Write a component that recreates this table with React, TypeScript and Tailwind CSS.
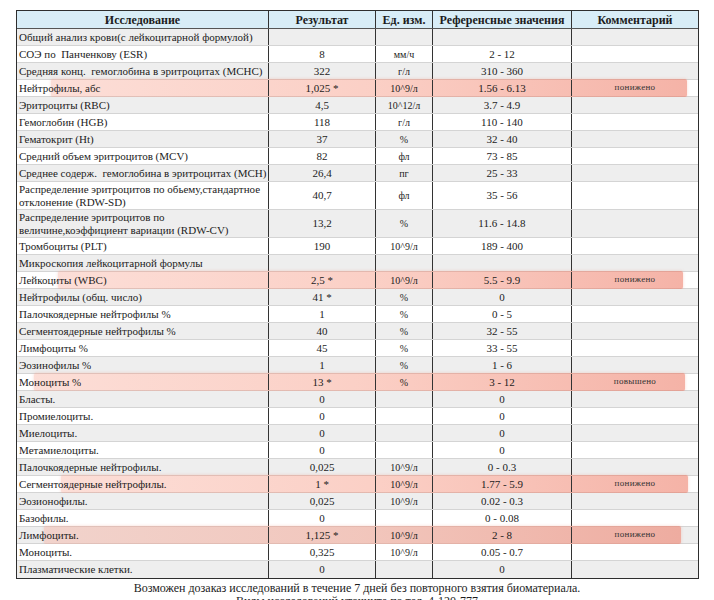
type Row = {
  name: string;
  result: string;
  unit: string;
  ref: string;
  comment?: string;
  mark?: [number, number];
  tall?: boolean;
};

const rows: Row[] = [
  { name: 'Общий анализ крови(с лейкоцитарной формулой)', result: '', unit: '', ref: '' },
  { name: 'СОЭ по  Панченкову (ESR)', result: '8', unit: 'мм/ч', ref: '2 - 12' },
  { name: 'Средняя конц.  гемоглобина в эритроцитах (MCHC)', result: '322', unit: 'г/л', ref: '310 - 360' },
  { name: 'Нейтрофилы, абс', result: '1,025 *', unit: '10^9/л', ref: '1.56 - 6.13', comment: 'понижено', mark: [34, 670] },
  { name: 'Эритроциты (RBC)', result: '4,5', unit: '10^12/л', ref: '3.7 - 4.9' },
  { name: 'Гемоглобин (HGB)', result: '118', unit: 'г/л', ref: '110 - 140' },
  { name: 'Гематокрит (Ht)', result: '37', unit: '%', ref: '32 - 40' },
  { name: 'Средний объем эритроцитов (MCV)', result: '82', unit: 'фл', ref: '73 - 85' },
  { name: 'Среднее содерж.  гемоглобина в эритроцитах (MCH)', result: '26,4', unit: 'пг', ref: '25 - 33' },
  { name: 'Распределение эритроцитов по обьему,стандартное отклонение (RDW-SD)', result: '40,7', unit: 'фл', ref: '35 - 56', tall: true },
  { name: 'Распределение эритроцитов по величине,коэффициент вариации (RDW-CV)', result: '13,2', unit: '%', ref: '11.6 - 14.8', tall: true },
  { name: 'Тромбоциты (PLT)', result: '190', unit: '10^9/л', ref: '189 - 400' },
  { name: 'Микроскопия лейкоцитарной формулы', result: '', unit: '', ref: '' },
  { name: 'Лейкоциты (WBC)', result: '2,5 *', unit: '10^9/л', ref: '5.5 - 9.9', comment: 'понижено', mark: [41, 666] },
  { name: 'Нейтрофилы (общ. число)', result: '41 *', unit: '%', ref: '0' },
  { name: 'Палочкоядерные нейтрофилы %', result: '1', unit: '%', ref: '0 - 5' },
  { name: 'Сегментоядерные нейтрофилы %', result: '40', unit: '%', ref: '32 - 55' },
  { name: 'Лимфоциты %', result: '45', unit: '%', ref: '33 - 55' },
  { name: 'Эозинофилы %', result: '1', unit: '%', ref: '1 - 6' },
  { name: 'Моноциты %', result: '13 *', unit: '%', ref: '3 - 12', comment: 'повышено', mark: [17, 668] },
  { name: 'Бласты.', result: '0', unit: '', ref: '0' },
  { name: 'Промиелоциты.', result: '0', unit: '', ref: '0' },
  { name: 'Миелоциты.', result: '0', unit: '', ref: '0' },
  { name: 'Метамиелоциты.', result: '0', unit: '', ref: '0' },
  { name: 'Палочкоядерные нейтрофилы.', result: '0,025', unit: '10^9/л', ref: '0 - 0.3' },
  { name: 'Сегментоядерные нейтрофилы.', result: '1 *', unit: '10^9/л', ref: '1.77 - 5.9', comment: 'понижено', mark: [44, 671] },
  { name: 'Эозионофилы.', result: '0,025', unit: '10^9/л', ref: '0.02 - 0.3' },
  { name: 'Базофилы.', result: '0', unit: '', ref: '0 - 0.08' },
  { name: 'Лимфоциты.', result: '1,125 *', unit: '10^9/л', ref: '2 - 8', comment: 'понижено', mark: [27, 664] },
  { name: 'Моноциты.', result: '0,325', unit: '10^9/л', ref: '0.05 - 0.7' },
  { name: 'Плазматические клетки.', result: '0', unit: '', ref: '0' },
];

const cell = "relative flex items-center font-['Liberation_Serif',serif]";

export default function App() {
  return (
    <div className="w-[714px] h-[600px] overflow-hidden bg-white text-[#1c1c1c] font-['Liberation_Serif',serif]">
      <div className="pt-[10px] pl-[16px]">
        <div className="w-[683px] border-[1.5px] border-[#2e2e2e]">
          <div className="flex h-[18px] bg-[#d8edf7] border-b border-[#555] font-bold text-[12px] leading-none">
            <div className={`${cell} w-[252px] justify-center border-r border-[#333]`}>Исследование</div>
            <div className={`${cell} w-[107px] justify-center border-r border-[#333]`}>Результат</div>
            <div className={`${cell} w-[57px] justify-center border-r border-[#333]`}>Ед. изм.</div>
            <div className={`${cell} w-[139px] justify-center border-r border-[#333]`}>Референсные значения</div>
            <div className={`${cell} flex-1 justify-center`}>Комментарий</div>
          </div>
          {rows.map((r, i) => (
            <div
              key={i}
              className={`relative flex text-[11px] border-b border-[#d4d4d4] last:border-b-0 ${r.tall ? 'h-[28px]' : 'h-[17px]'} ${i % 2 === 0 ? 'bg-[#eeeeee]' : 'bg-white'}`}
            >
              {r.mark && (
                <div
                  className="absolute top-[-1px] h-[18px] rounded-[2px] bg-gradient-to-r from-[rgba(247,160,140,0.35)] via-[rgba(246,150,128,0.45)] to-[rgba(238,128,108,0.6)] shadow-[0_0_3px_rgba(240,140,120,0.35)]"
                  style={{ left: r.mark[0], width: r.mark[1] - r.mark[0] }}
                />
              )}
              <div className={`${cell} w-[252px] pl-[2px] border-r border-[#333] leading-[13px] ${r.tall ? 'pr-1' : 'whitespace-pre'}`}>{r.name}</div>
              <div className={`${cell} w-[107px] justify-center border-r border-[#333]`}>{r.result}</div>
              <div className={`${cell} w-[57px] justify-center border-r border-[#333] text-[10px]`}>{r.unit}</div>
              <div className={`${cell} w-[139px] justify-center border-r border-[#333]`}>{r.ref}</div>
              <div className={`${cell} flex-1 justify-center text-[9px] tracking-[0.3px] text-[#333]`}>{r.comment}</div>
            </div>
          ))}
        </div>
      </div>
      <div className="mt-[3px] text-center text-[12px] leading-[13px]">
        <p>Возможен дозаказ исследований в течение 7 дней без повторного взятия биоматериала.</p>
        <p>Виды исследований уточните по тел. 4-120-777</p>
      </div>
    </div>
  );
}
